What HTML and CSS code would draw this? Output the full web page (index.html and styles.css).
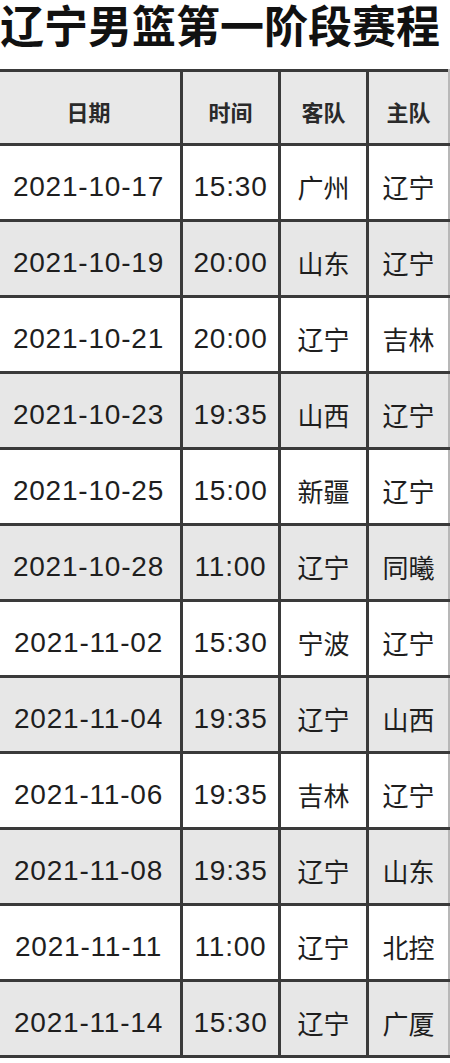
FILE: index.html
```html
<!DOCTYPE html>
<html lang="zh-CN">
<head>
<meta charset="utf-8">
<title>辽宁男篮第一阶段赛程</title>
<link rel="stylesheet" href="styles.css">
</head>
<body>
<div class="page">
  <h1 class="title">辽宁男篮第一阶段赛程</h1>
  <table class="schedule">
    <colgroup>
      <col class="c-date"><col class="c-time"><col class="c-away"><col class="c-home">
    </colgroup>
    <thead>
      <tr><th>日期</th><th>时间</th><th>客队</th><th>主队</th></tr>
    </thead>
    <tbody>
      <tr><td class="num">2021-10-17</td><td class="num">15:30</td><td>广州</td><td>辽宁</td></tr>
      <tr><td class="num">2021-10-19</td><td class="num">20:00</td><td>山东</td><td>辽宁</td></tr>
      <tr><td class="num">2021-10-21</td><td class="num">20:00</td><td>辽宁</td><td>吉林</td></tr>
      <tr><td class="num">2021-10-23</td><td class="num">19:35</td><td>山西</td><td>辽宁</td></tr>
      <tr><td class="num">2021-10-25</td><td class="num">15:00</td><td>新疆</td><td>辽宁</td></tr>
      <tr><td class="num">2021-10-28</td><td class="num">11:00</td><td>辽宁</td><td>同曦</td></tr>
      <tr><td class="num">2021-11-02</td><td class="num">15:30</td><td>宁波</td><td>辽宁</td></tr>
      <tr><td class="num">2021-11-04</td><td class="num">19:35</td><td>辽宁</td><td>山西</td></tr>
      <tr><td class="num">2021-11-06</td><td class="num">19:35</td><td>吉林</td><td>辽宁</td></tr>
      <tr><td class="num">2021-11-08</td><td class="num">19:35</td><td>辽宁</td><td>山东</td></tr>
      <tr><td class="num">2021-11-11</td><td class="num">11:00</td><td>辽宁</td><td>北控</td></tr>
      <tr><td class="num">2021-11-14</td><td class="num">15:30</td><td>辽宁</td><td>广厦</td></tr>
    </tbody>
  </table>
</div>
</body>
</html>
```
FILE: styles.css
```css
html, body {
  margin: 0;
  padding: 0;
  background: #ffffff;
}
body {
  width: 450px;
  height: 1063px;
  overflow: hidden;
  font-family: "Noto Sans CJK SC", "Liberation Sans", sans-serif;
  color: #1e1e1e;
}
.page {
  width: 450px;
}
.title {
  margin: 2px 0 23px 0;
  font-size: 44px;
  line-height: 44px;
  font-weight: 700;
  white-space: nowrap;
  color: #111;
}
.schedule {
  border-collapse: collapse;
  margin-left: -6px;
  table-layout: fixed;
  width: 454px;
}
.c-date { width: 186px; }
.c-time { width: 98px; }
.c-away { width: 88px; }
.c-home { width: 82px; }
.schedule th,
.schedule td {
  border: 3px solid #3a3a3a;
  height: 76px;
  padding: 8px 0 0 0;
  text-align: center;
  vertical-align: middle;
  box-sizing: border-box;
}
.schedule th {
  height: 74px;
  padding-top: 6px;
}
.schedule td:last-child,
.schedule th:last-child {
  border-right-color: #b8b8b8;
}
.schedule th {
  background: #e8e8e8;
  font-size: 22px;
  font-weight: 700;
  color: #2a2a2a;
}
.schedule td {
  font-size: 26px;
  font-weight: 400;
}
.schedule tbody tr:nth-child(odd) { background: #ffffff; }
.schedule tbody tr:nth-child(even) { background: #e7e7e7; }
.schedule td.num {
  font-family: "Liberation Sans", "Noto Sans", sans-serif;
  font-size: 28px;
  letter-spacing: 0.8px;
}
```
